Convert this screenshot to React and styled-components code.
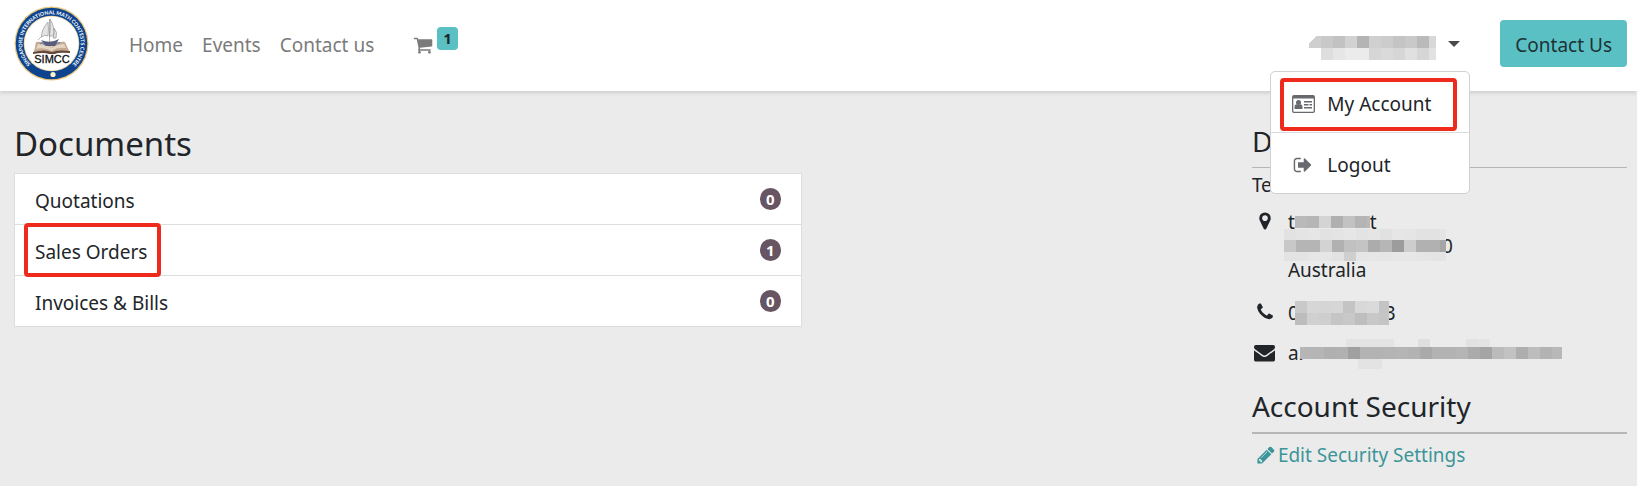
import React from 'react'
import styled, { createGlobalStyle } from 'styled-components'
import { useState } from 'react'

const GlobalStyle = createGlobalStyle`
    * {
        box-sizing: border-box;
    }
    body {
        margin: 0;
        background-color: #ebebeb;
        color: #212529;
        font-family: "Noto Sans", "Open Sans", sans-serif;
        font-size: 19px;
        line-height: 24px;
    }
    a {
        color: inherit;
        text-decoration: none;
    }
`
const Header = styled.header`
    position: relative;
    z-index: 2;
    display: flex;
    align-items: center;
    min-height: 91px;
    padding: 0 10px 4px 14px;
    background-color: #fff;
    box-shadow: 0 2px 4px rgba(0, 0, 0, 0.13);
`
const Brand = styled.a`
    display: flex;
    margin-right: 40px;
`
const Nav = styled.nav`
    display: flex;
    align-items: center;
    gap: 19px;
    padding-top: 2px;
    color: #7b7b7b;
`
const CartLink = styled.a`
    display: flex;
    align-items: center;
    gap: 4px;
    margin-left: 20px;
`
const CartCount = styled.span`
    margin-bottom: 12px;
    padding: 0 6px;
    border-radius: 4px;
    background-color: #5bc0c4;
    color: #15292b;
    font-size: 15px;
    font-weight: 700;
    line-height: 23px;
`
const Account = styled.div`
    position: relative;
    display: flex;
    margin-left: auto;
    margin-right: 30px;
`
const UserButton = styled.button`
    display: flex;
    align-items: center;
    gap: 12px;
    height: 48px;
    padding: 0 10px;
    border: none;
    background: none;
    cursor: pointer;
`
const Caret = styled.span`
    border-top: 6px solid #4a4a4a;
    border-left: 6px solid transparent;
    border-right: 6px solid transparent;
`
const Menu = styled.div`
    position: absolute;
    top: 100%;
    right: 0;
    width: 200px;
    margin-top: 3px;
    border: 1px solid #cfd1d2;
    border-radius: 5px;
    background-color: #fff;
`
const MenuItem = styled.a`
    position: relative;
    display: flex;
    align-items: center;
    gap: 12px;
    height: 60px;
    padding: 4px 20px 0;
    & + & {
        height: 61px;
        border-top: 1px solid #d9dbdd;
    }
`
const MenuIcon = styled.span`
    display: flex;
    justify-content: center;
    width: 24px;
    color: #66696d;
`
const Marker = styled.span`
    position: absolute;
    z-index: 1;
    inset: ${props => props.inset};
    width: ${props => props.width};
    border: 4px solid #ee2a1c;
    border-radius: 4px;
    pointer-events: none;
`
const ContactButton = styled.button`
    height: 47px;
    padding: 2px 15px 0;
    border: none;
    border-radius: 4px;
    background-color: #5bc0c4;
    color: #1c3335;
    font: inherit;
    cursor: pointer;
`
const Main = styled.main`
    display: grid;
    grid-template-columns: 21fr 12fr 10fr;
    padding: 32px 10px 16px 14px;
`
const Title = styled.h1`
    margin: 0 0 8px;
    font-size: 33px;
    font-weight: 400;
    line-height: 42px;
`
const DocumentList = styled.div`
    border: 1px solid #dcdddd;
    background-color: #fff;
`
const DocumentRow = styled.a`
    position: relative;
    display: flex;
    align-items: center;
    justify-content: space-between;
    min-height: 50px;
    padding: 4px 20px 0;
    & + & {
        min-height: 51px;
        border-top: 1px solid #dcdddd;
    }
`
const Count = styled.span`
    width: 21px;
    margin-bottom: 4px;
    border-radius: 11px;
    background-color: #685563;
    color: #fff;
    font-size: 15px;
    font-weight: 700;
    line-height: 22px;
    text-align: center;
`
const Side = styled.aside`
    grid-column: 3;
`
const SideTitle = styled.h2`
    margin: 0 0 5px;
    padding-bottom: 8px;
    border-bottom: ${props => props.line} solid #b5b6b7;
    font-size: 28px;
    font-weight: 400;
    line-height: 36px;
`
const Address = styled.address`
    font-style: normal;
`
const Detail = styled.div`
    display: flex;
    gap: 12px;
    padding-left: 2px;
    margin-top: ${props => props.space};
`
const DetailIcon = styled.span`
    display: flex;
    align-items: center;
    justify-content: center;
    width: 22px;
    height: 22px;
`
const Line = styled.div`
    display: flex;
    align-items: center;
    height: 24px;
`
const SecurityTitle = styled(SideTitle)`
    margin: 23px 0 9px;
`
const EditLink = styled.a`
    display: flex;
    align-items: center;
    gap: 2px;
    padding-left: 4px;
    color: #3c9599;
`
const Blocks = styled.svg`
    display: block;
    position: relative;
    flex: none;
    overflow: visible;
    margin: 0 ${props => props.$over || '0'};
`

// 1792 unit glyphs
const glyphs = {
    cart: 'M704 1536q0 52-38 90t-90 38-90-38-38-90 38-90 90-38 90 38 38 90zm896 0q0 52-38 90t-90 38-90-38-38-90 38-90 90-38 90 38 38 90zm128-1088v512q0 24-16.5 42.5t-40.5 21.5l-1044 122q13 60 13 70 0 16-24 64h920q26 0 45 19t19 45-19 45-45 19h-1024q-26 0-45-19t-19-45q0-11 8-31.5t16-36 21.5-40 15.5-29.5l-177-823h-204q-26 0-45-19t-19-45 19-45 45-19h256q16 0 28.5 6.5t19.5 15.5 13 24.5 8 26 5.5 29.5 4.5 26h1201q26 0 45 19t19 45z',
    signOut: 'M704 1440q0 4 1 20t.5 26.5-3 23.5-10 19.5-20.5 6.5h-320q-119 0-203.5-84.5t-84.5-203.5v-704q0-119 84.5-203.5t203.5-84.5h320q13 0 22.5 9.5t9.5 22.5q0 4 1 20t.5 26.5-3 23.5-10 19.5-20.5 6.5h-320q-66 0-113 47t-47 113v704q0 66 47 113t113 47h312l11.5 1 11.5 3 8 5.5 7 9 2 13.5zm928-544q0 26-19 45l-544 544q-19 19-45 19t-45-19-19-45v-288h-448q-26 0-45-19t-19-45v-384q0-26 19-45t45-19h448v-288q0-26 19-45t45-19 45 19l544 544q19 19 19 45z',
    marker: 'M1152 640q0-106-75-181t-181-75-181 75-75 181 75 181 181 75 181-75 75-181zm256 0q0 109-33 179l-364 774q-16 33-47.5 52t-67.5 19-67.5-19-46.5-52l-365-774q-33-70-33-179 0-212 150-362t362-150 362 150 150 362z',
    phone: 'M1600 1240q0 27-10 70.5t-21 68.5q-21 50-122 106-94 51-186 51-27 0-53-3.5t-57-12.5-47-14.5-55.5-20.5-49-18q-98-35-175-83-127-79-264-216t-216-264q-48-77-83-175-3-9-18-49t-20.5-55.5-14.5-47-12.5-57-3.5-53q0-92 51-186 56-101 106-122 25-11 68.5-21t70.5-10q14 0 21 3 18 6 53 76 11 19 30 54t35 63.5 31 53.5q3 4 17.5 25t21.5 35.5 7 28.5q0 20-28.5 50t-62 55-62 53-28.5 46q0 9 5 22.5t8.5 20.5 14 24 11.5 19q76 137 174 235t235 174q2 1 19 11.5t24 14 20.5 8.5 22.5 5q18 0 46-28.5t53-62 55-62 50-28.5q14 0 28.5 7t35.5 21.5 25 17.5q25 15 53.5 31t63.5 35 54 30q70 35 76 53 3 7 3 21z',
    envelope: 'M1792 710v794q0 66-47 113t-113 47h-1472q-66 0-113-47t-47-113v-794q44 49 101 87 362 246 497 345 57 42 92.5 65.5t94.5 48 110 24.5h2q51 0 110-24.5t94.5-48 92.5-65.5q170-123 498-345 57-39 100-87zm0-294q0 79-49 151t-122 123q-376 261-468 325-10 7-42.5 31t-54 38.5-52 32.5-57.5 27-50 9h-2q-23 0-50-9t-57.5-27-52-32.5-54-38.5-42.5-31q-91-64-262-182.5t-205-142.5q-62-42-117-115.5t-55-136.5q0-78 41.5-130t118.5-52h1472q65 0 112.5 47t47.5 113z',
    pencil: 'M491 1536l91-91-235-235-91 91v107h128v128h107zm523-928q0-22-22-22-10 0-17 7l-542 542q-7 7-7 17 0 22 22 22 10 0 17-7l542-542q7-7 7-17zm-54-192l416 416-832 832h-416v-416zm683 96q0 53-37 90l-166 166-416-416 166-165q36-38 90-38 53 0 91 38l235 234q37 39 37 91z',
}

const Glyph = ({ name, size = 20 }) => (
  <svg width={size} height={size} viewBox="0 0 1792 1792" fill="currentColor" aria-hidden="true">
    <path d={glyphs[name]} />
  </svg>
)

const CardIcon = () => (
  <svg width="23" height="18" viewBox="0 0 23 18" fill="currentColor" aria-hidden="true">
    <path fillRule="evenodd" d="M2 0h19q2 0 2 2v14q0 2-2 2h-19q-2 0-2-2v-14q0-2 2-2zM1.300 3.500v12.500q0 .7.7.7h19q.7 0 .7-.7v-12.500z" />
    <circle cx="6.500" cy="7.500" r="2.500" />
    <path d="M2.500 14v-2q0-2.500 2-2.700q2 1 4 0q2 .2 2 2.700v2zM12 6h8v1.400h-8zM12 9h4.500v1.400h-4.500zM17.500 9h2.500v1.400h-2.500zM12 12h8v1.400h-8z" />
  </svg>
)

const Logo = () => (
  <svg width="75" height="75" viewBox="0 0 75 75" role="img" aria-label="SIMCC">
    <defs>
      <path id="ring" d="M17 58.500A29.300 29.300 0 1 1 58 58.500" />
    </defs>
    <circle cx="37.500" cy="37.500" r="37" fill="#e9c77a" />
    <circle cx="37.500" cy="37.500" r="35.800" fill="#0d438f" />
    <circle cx="37.500" cy="37.500" r="27.800" fill="#ecd49a" />
    <circle cx="37.500" cy="37.500" r="27" fill="#fff" />
    <text fill="#fff" fontFamily="Lato, sans-serif" fontWeight="700" fontSize="5.200">
      <textPath href="#ring" startOffset="50%" textAnchor="middle">SINGAPORE INTERNATIONAL MATH CONTESTS CENTRE</textPath>
    </text>
    <g fill="#e4e4e6" stroke="#88888c" strokeWidth=".6">
      <path d="M34 16Q27 24 27.500 31Q31 28 34 30Q35 23 34 16z" />
      <path d="M36 13Q41 21 39.500 30Q37 29 35.500 31Q37 22 36 13z" />
      <path d="M40 22Q44 26 42 32L39 32Q41 27 40 22z" />
      <path d="M35.500 13V36M27 31L24 34" fill="none" />
    </g>
    <path d="M22 36Q31 35 37.500 41Q44 35 51 36L55 45Q44 43 38 47Q29 43 20 46z" fill="#c5aa91" />
    <path d="M24 38Q32 38 37.500 42Q44 38 50 38L52 42Q43 41 38 45Q30 41 22 43z" fill="#e6d5c2" />
    <path d="M19 46Q30 43 38 46Q45 43 56 45V47Q44 46 41 48H35Q30 46 19 48z" fill="#65483b" />
    <path d="M26 38q2-2 4 0t4 0 4 0 4 0 4-1" fill="none" stroke="#7887b4" strokeWidth="1.500" />
    <path d="M27 34Q36 38 45 33L41 40H32z" fill="#595d79" />
    <text x="38" y="57" textAnchor="middle" fill="#111" fontFamily="Liberation Sans, sans-serif" stroke="#111" strokeWidth=".3" fontSize="11">SIMCC</text>
    <circle cx="39" cy="68.500" r="2.600" fill="#fff6c7" />
  </svg>
)

// rows: [x, y, height, shades], every block is 12px wide
const Redacted = ({ width, height = 12, rows, edge, over }) => (
  <Blocks width={width} height={height} $over={over} aria-hidden="true" shapeRendering="crispEdges">
    {rows.map(([x, y, h, shades]) =>
      shades.split(' ').map((shade, i) => (
        <rect key={`${x}-${y}-${i}`} x={x + i * 12} y={y} height={h} fill={`#${shade.repeat(3)}`}
          width={Math.min(12, width - x - i * 12)} />
      ))
    )}
    {edge && <path d={edge} fill="#cfcfcf" />}
  </Blocks>
)

const documents = [
  { title: 'Quotations', count: 0 },
  { title: 'Sales Orders', count: 1, marked: true },
  { title: 'Invoices & Bills', count: 0 },
]

const App = () => {
  const [open, setOpen] = useState(true)

  return (
    <>
      <GlobalStyle />
      <Header>
        <Brand href="#"><Logo /></Brand>
        <Nav>
          <a href="#home">Home</a>
          <a href="#events">Events</a>
          <a href="#contact">Contact us</a>
          <CartLink href="#cart" aria-label="Cart">
            <Glyph name="cart" />
            <CartCount>1</CartCount>
          </CartLink>
        </Nav>
        <Account>
          <UserButton aria-label="User menu" aria-expanded={open} onClick={() => setOpen(!open)}>
            <Redacted
              width={127}
              height={16}
              rows={[[12, 0, 12, 'c9 c2 d2 b4 d0 cc c4 c9 ba d8'], [12, 12, 12, 'de e6 eb eb d6 da d6 e0 d6 e2']]}
              edge="M0 8L7 0H12V12H0z"
            />
            <Caret />
          </UserButton>
          {open && (
            <Menu>
              <MenuItem href="#account">
                <MenuIcon><CardIcon /></MenuIcon>
                My Account
                <Marker inset="6px 12px 1px 9px" />
              </MenuItem>
              <MenuItem href="#logout">
                <MenuIcon><Glyph name="signOut" /></MenuIcon>
                Logout
              </MenuItem>
            </Menu>
          )}
        </Account>
        <ContactButton>Contact Us</ContactButton>
      </Header>
      <Main>
        <section>
          <Title>Documents</Title>
          <DocumentList>
            {documents.map((doc) => (
              <DocumentRow href="#documents" key={doc.title}>
                {doc.title}
                <Count>{doc.count}</Count>
                {doc.marked && <Marker inset="-2px auto -2px 9px" width="137px" />}
              </DocumentRow>
            ))}
          </DocumentList>
        </section>
        <Side>
          <SideTitle line="1px">Details</SideTitle>
          <Address>
            <Line>Te</Line>
            <Detail space="13px">
              <DetailIcon><Glyph name="marker" /></DetailIcon>
              <div>
                <Line>t<Redacted width={75} rows={[[0, 0, 12, 'b9 b6 d4 b0 c2 b4 b9']]} />t</Line>
                <Line>
                  <Redacted
                    width={162}
                    over="-4px"
                    rows={[
                      [0, -11, 11, 'e2 e4 e6 e2 e4 e6 e3 e5 e1 e6 e5 e2 e2 e5'],
                      [0, 0, 12, 'c8 b5 b5 d3 b1 c1 c4 ac b6 9c cd b1 b1 a6'],
                      [0, 12, 9, 'e3 e3 e6 e6 e2 cf e5 e6 e5 e7 e7 e5 e4 e4'],
                    ]}
                  />
                  0
                </Line>
                <Line>Australia</Line>
              </div>
            </Detail>
            <Detail space="19px">
              <DetailIcon><Glyph name="phone" /></DetailIcon>
              <Line>
                0<Redacted width={94} height={24} over="-4px" rows={[[0, 0, 12, 'c9 d6 d5 d6 c4 d8 da c4'], [0, 12, 12, 'bd d0 ce c5 c8 be c8 c5']]} />3
              </Line>
            </Detail>
            <Detail space="16px">
              <DetailIcon><Glyph name="envelope" size={21} /></DetailIcon>
              <Line>
                a.<Redacted
                  width={262}
                  over="-4px"
                  rows={[
                    [46, -8, 8, 'e3 e3 e3 e3'],
                    [118, -8, 8, 'df'],
                    [166, -8, 8, 'e2 e4'],
                    [0, 0, 12, 'b6 b5 b0 b1 a0 b3 b3 b4 b5 b3 aa b3 b3 b5 ab a5 bb c2 ae bd b3 b8'],
                    [58, 12, 10, 'e3 e3'],
                  ]}
                />
              </Line>
            </Detail>
          </Address>
          <SecurityTitle line="2px">Account Security</SecurityTitle>
          <EditLink href="#security"><Glyph name="pencil" /> Edit Security Settings</EditLink>
        </Side>
      </Main>
    </>
  )
}

export default App
